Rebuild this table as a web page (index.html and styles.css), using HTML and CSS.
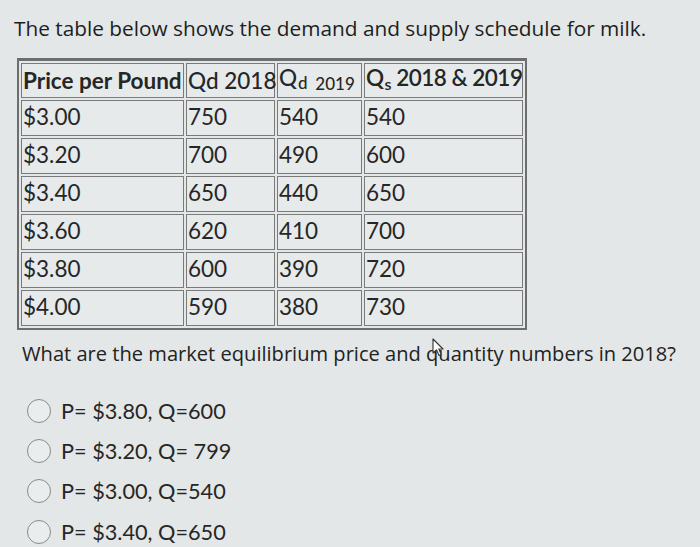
FILE: index.html
```html
<!DOCTYPE html>
<html>
<head>
<meta charset="utf-8">
<link rel="stylesheet" href="styles.css">
</head>
<body>
<div class="page">
  <p class="title">The table below shows the demand and supply schedule for milk.</p>
  <table class="sched">
    <colgroup>
      <col class="c1"><col class="c2"><col class="c3"><col class="c4">
    </colgroup>
    <tr class="head">
      <td>Price per Pound</td>
      <td>Qd 2018</td>
      <td>Q<sub class="sd">d</sub> <span class="small">2019</span></td>
      <td class="qs">Q<sub class="ss">s</sub> 2018 &amp; 2019</td>
    </tr>
    <tr><td>$3.00</td><td>750</td><td>540</td><td>540</td></tr>
    <tr><td>$3.20</td><td>700</td><td>490</td><td>600</td></tr>
    <tr><td>$3.40</td><td>650</td><td>440</td><td>650</td></tr>
    <tr><td>$3.60</td><td>620</td><td>410</td><td>700</td></tr>
    <tr><td>$3.80</td><td>600</td><td>390</td><td>720</td></tr>
    <tr><td>$4.00</td><td>590</td><td>380</td><td>730</td></tr>
  </table>
  <p class="question">What are the market equilibrium price and <span class="cur-wrap">quantity<svg class="cursor" viewBox="0 0 12 19" width="12" height="19"><path d="M1 1 L1 15 L4.5 11.8 L7 17.5 L9.2 16.5 L6.8 11 L11 11 Z" fill="#fff" stroke="#333" stroke-width="1.1" stroke-linejoin="round"/></svg></span> numbers in 2018?</p>
  <ul class="options">
    <li><span class="radio"></span><span>P= $3.80, Q=600</span></li>
    <li><span class="radio"></span><span>P= $3.20, Q= 799</span></li>
    <li><span class="radio"></span><span>P= $3.00, Q=540</span></li>
    <li><span class="radio"></span><span>P= $3.40, Q=650</span></li>
  </ul>
</div>
</body>
</html>
```

FILE: styles.css
```css
html, body {
  margin: 0;
  padding: 0;
  background: #e3e7e7;
}
body {
  width: 700px;
  height: 547px;
  overflow: hidden;
  color: #222;
}
.page {
  padding: 14px 0 0 14px;
}
.title {
  margin: 0;
  font-family: "Open Sans", sans-serif;
  font-size: 20.8px;
  line-height: 28px;
  color: #1e1e1e;
}
.sched {
  margin: 16px 0 0 3px;
  border-collapse: separate;
  border-spacing: 2px;
  border: 2px solid #6e6e6e;
  border-top-width: 3px;
  font-family: Lato, sans-serif;
  font-size: 22.5px;
  color: #262626;
  width: 510px;
  table-layout: fixed;
}
.c1 { width: 163px; }
.c2 { width: 89px; }
.c3 { width: 85px; }
.c4 { width: 159px; }
.sched td {
  border: 1.5px solid #7a7a7a;
  background: #e6eaea;
  height: 36px;
  box-sizing: border-box;
  padding: 0 0 2px 1px;
  white-space: nowrap;
  line-height: 22px;
  overflow: visible;
}
.head td {
  font-weight: bold;
  height: 35px;
  padding-top: 2px;
}
.head td:nth-child(2),
.head td:nth-child(3) {
  font-weight: 500;
}
.head td.qs {
  font-weight: 600;
  letter-spacing: -0.5px;
}
.sd {
  font-size: 17px;
  vertical-align: -3px;
  margin-left: 1px;
}
.ss {
  font-size: 16px;
  vertical-align: -4px;
  margin-left: 1px;
}
.small {
  font-size: 17px;
  vertical-align: -4px;
  margin-left: 2px;
}
.question {
  margin: 10px 0 0 8px;
  font-family: "Open Sans", sans-serif;
  font-size: 20.1px;
  line-height: 28px;
  color: #222;
}
.cur-wrap {
  position: relative;
}
.cursor {
  position: absolute;
  left: 6px;
  top: -2px;
}
.options {
  list-style: none;
  margin: 23px 0 0 13px;
  padding: 0;
  font-family: Lato, sans-serif;
  font-size: 21.7px;
  color: #262626;
}
.options li {
  display: flex;
  align-items: center;
  gap: 10px;
  height: 40.2px;
}
.radio {
  width: 24px;
  height: 24px;
  border: 1.5px solid #8a8a8a;
  border-radius: 50%;
  box-sizing: border-box;
  background: #e9eded;
}
```
